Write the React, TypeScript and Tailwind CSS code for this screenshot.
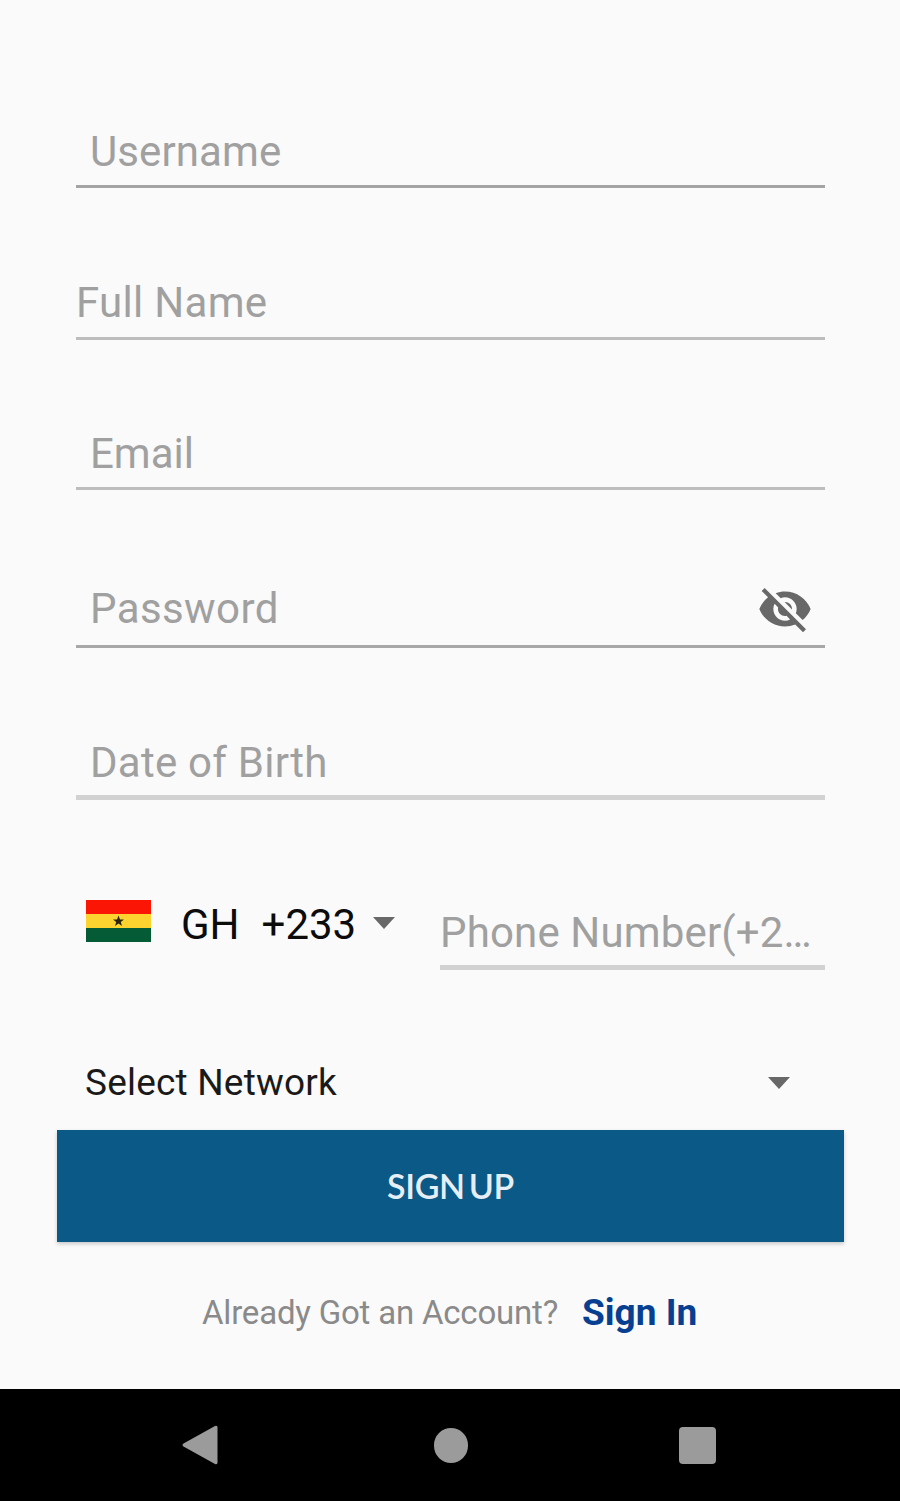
import type { ReactNode } from "react";

import { clsx } from "clsx";
import { MdVisibilityOff } from "react-icons/md";

interface FieldProps {
  label: string;
  className?: string;
  labelClassName?: string;
  children?: ReactNode;
}

function Field({ label, className, labelClassName, children }: FieldProps) {
  return (
    <div className={clsx("flex items-end justify-between", className)}>
      <span
        className={clsx(
          "whitespace-nowrap text-[42px] leading-[48px] text-[#a0a0a0]",
          labelClassName
        )}>
        {label}
      </span>
      {children}
    </div>
  );
}

function GhanaFlag() {
  return (
    <svg viewBox="0 0 65 42" className="h-[42px] w-[65px]">
      <path d="M0 0H65V14H0Z" fill="#fb1505" />
      <path d="M0 14H65V28H0Z" fill="#fdd32f" />
      <path d="M0 28H65V42H0Z" fill="#045b36" />
      <path
        d="M32.500 15.500L34 19.500H38L34.800 22L36 26L32.500 23.600L29 26L30.200 22L27 19.500H31Z"
        fill="#2a2508"
      />
    </svg>
  );
}

function Caret({ className }: { className?: string }) {
  return (
    <svg viewBox="0 0 22 12" className={clsx("h-3 w-[22px]", className)}>
      <path d="M0 0H22L11 12Z" fill="#686868" />
    </svg>
  );
}

function NavigationBar() {
  return (
    <nav className="flex h-[112px] items-center justify-between bg-black pr-[184px] pl-[182px]">
      <svg viewBox="0 0 36 40" className="h-10 w-9">
        <path
          d="M1.500 18.500L33 1Q35.500 0 35.500 2.500V37.500Q35.500 40 33 39L1.500 21.500Q-0.500 20 1.500 18.500Z"
          fill="#9b9b9b"
        />
      </svg>
      <div className="ml-[4px] h-[35px] w-[34px] rounded-full bg-[#9b9b9b]" />
      <div className="h-[37px] w-[37px] rounded-[4px] bg-[#9b9b9b]" />
    </nav>
  );
}

export default function App() {
  return (
    <div className="flex h-[1501px] w-[900px] flex-col bg-[#fafafa] font-['Roboto',sans-serif]">
      <main className="flex-1">
        <div className="pr-[75px] pl-[76px]">
          <Field
            label="Username"
            className="h-[188px] border-b-3 border-[#a4a4a4] pb-[9px] pl-[14px]"
            labelClassName="tracking-[0.1px]"
          />
          <Field
            label="Full Name"
            className="h-[152px] border-b-3 border-[#bdbdbd] pb-[10px]"
            labelClassName="tracking-[0.3px]"
          />
          <Field
            label="Email"
            className="h-[150px] border-b-3 border-[#bdbdbd] pb-[9px] pl-[14px]"
          />
          <Field
            label="Password"
            className="h-[158px] border-b-3 border-[#a8a8a8] pb-[12px] pl-[14px]"
            labelClassName="tracking-[0.4px]">
            <MdVisibilityOff className="mr-[12px] -mb-[4px] h-[56px] w-[56px] text-[#686868]" />
          </Field>
          <Field
            label="Date of Birth"
            className="h-[152px] border-b-5 border-[#d2d2d2] pb-[8px] pl-[14px]"
            labelClassName="tracking-[0.25px]"
          />

          <div className="flex h-[170px] items-end justify-between pl-[10px]">
            <div className="mb-[21px] flex h-[48px] items-center text-[42px] leading-[48px] text-[#0c0c0c]">
              <div className="mb-[8px]">
                <GhanaFlag />
              </div>
              <span className="ml-[30px]">GH</span>
              <span className="ml-[22px]">+233</span>
              <Caret className="mb-[4px] ml-[17px]" />
            </div>
            <Field
              label="Phone Number(+2…"
              className="w-[385px] border-b-5 border-[#d2d2d2] pb-[8px]"
              labelClassName="tracking-[0.15px]"
            />
          </div>

          <div className="mt-[92px] flex h-[42px] items-center justify-between pr-[35px] pl-[9px]">
            <span className="text-[37px] leading-[42px] tracking-[0.2px] text-[#1a1a1a]">
              Select Network
            </span>
            <Caret />
          </div>
        </div>

        <button
          type="button"
          className="mt-[26px] ml-[57px] block h-[112px] w-[787px] bg-[#0b5986] pb-[2px] font-['Lato',sans-serif] text-[34px] font-semibold tracking-[-0.4px] text-[#e6eef6] shadow-[0_2px_4px_rgba(0,0,0,0.2)] [word-spacing:-4px]">
          SIGN UP
        </button>

        <div className="mt-[48px] flex items-baseline pl-[202px] leading-[44px]">
          <span className="text-[33px] tracking-[-0.2px] text-[#8a8a8a]">
            Already Got an Account?
          </span>
          <a
            href="#"
            className="relative top-px ml-[24px] text-[37px] font-bold text-[#073f91]">
            Sign In
          </a>
        </div>
      </main>
      <NavigationBar />
    </div>
  );
}
